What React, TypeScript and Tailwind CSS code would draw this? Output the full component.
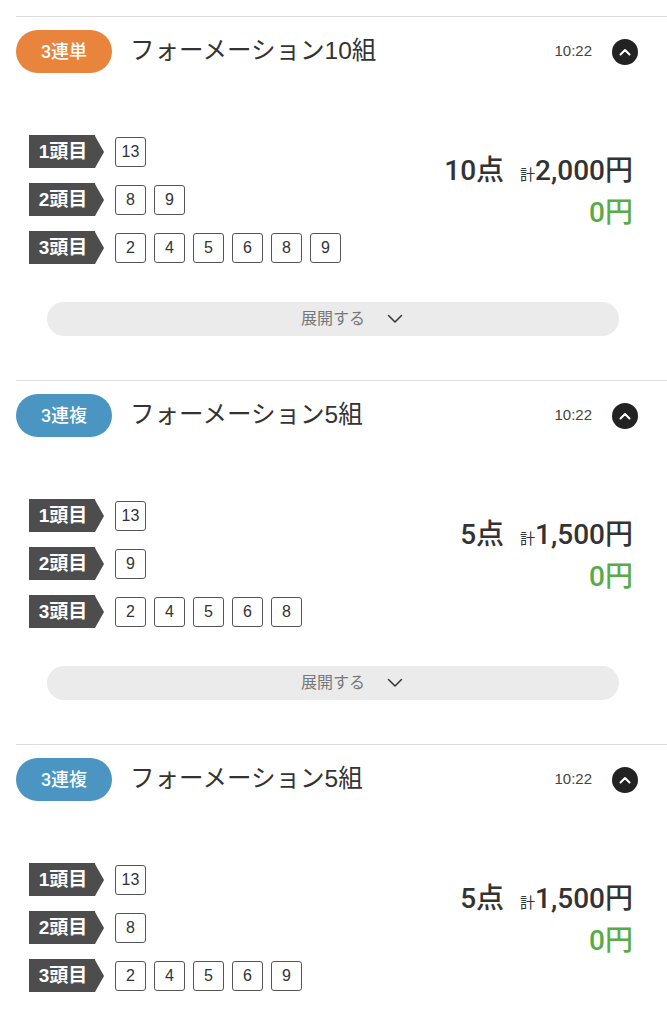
import React from 'react'

type Ticket = {
  kind: string
  color: string
  title: string
  time: string
  legs: number[][]
  points: string
  total: string
  payout: string
}

const tickets: Ticket[] = [
  { kind: '3連単', color: 'bg-[#e8843c]', title: 'フォーメーション10組', time: '10:22', legs: [[13], [8, 9], [2, 4, 5, 6, 8, 9]], points: '10点', total: '2,000円', payout: '0円' },
  { kind: '3連複', color: 'bg-[#4a95c2]', title: 'フォーメーション5組', time: '10:22', legs: [[13], [9], [2, 4, 5, 6, 8]], points: '5点', total: '1,500円', payout: '0円' },
  { kind: '3連複', color: 'bg-[#4a95c2]', title: 'フォーメーション5組', time: '10:22', legs: [[13], [8], [2, 4, 5, 6, 9]], points: '5点', total: '1,500円', payout: '0円' },
]

const font = { fontFamily: '"Liberation Sans", "Noto Sans CJK JP", sans-serif' }
const medium = { fontFamily: 'Roboto, "Noto Sans CJK JP", sans-serif' }

function LegTag({ n }: { n: number }) {
  return (
    <div className="relative flex h-[33px] w-[75px] items-center">
      <div className="flex h-full w-[66px] items-center justify-center bg-[#4d4d4d] pl-[2px] text-[19px] font-bold leading-none text-white">
        {n}頭目
      </div>
      <div className="h-0 w-0 border-y-[16.5px] border-l-[9px] border-y-transparent border-l-[#4d4d4d]" />
    </div>
  )
}

function Section({ t }: { t: Ticket }) {
  return (
    <section className="ml-4 border-t border-[#dcdcdc]">
      <div className="flex items-center pt-[13px]">
        <div className={`flex h-[43px] w-[96px] items-center justify-center rounded-full ${t.color} text-[18px] font-medium text-white`} style={medium}>
          {t.kind}
        </div>
        <div className="ml-[18px] flex-1 text-[24.5px] text-[#333]">{t.title}</div>
        <div className="text-[15px] text-[#444]">{t.time}</div>
        <div className="ml-[20px] mr-[29px] flex h-[26px] w-[26px] items-center justify-center rounded-full bg-[#222]">
          <svg width="12" height="8" viewBox="0 0 12 8" fill="none">
            <path d="M1.5 6.5 L6 2 L10.5 6.5" stroke="white" strokeWidth="2" strokeLinecap="round" strokeLinejoin="round" />
          </svg>
        </div>
      </div>

      <div className="mt-[62px] flex items-center pl-[13px] pr-[34px]">
        <div className="flex flex-col gap-[15px]">
          {t.legs.map((nums, i) => (
            <div key={i} className="flex items-center">
              <LegTag n={i + 1} />
              <div className="ml-[11px] flex gap-[8px]">
                {nums.map(v => (
                  <div key={v} className="flex h-[30px] w-[31px] items-center justify-center rounded-[3px] border border-[#555] text-[16px] text-[#333]">
                    {v}
                  </div>
                ))}
              </div>
            </div>
          ))}
        </div>
        <div className="mb-[15px] ml-auto flex flex-col items-end" style={medium}>
          <div className="flex items-baseline text-[#333]">
            <span className="text-[28px] font-medium">{t.points}</span>
            <span className="ml-[16px] text-[15px]">計</span>
            <span className="text-[28px] font-medium">{t.total}</span>
          </div>
          <div className="text-[28px] font-medium text-[#5aab46]">{t.payout}</div>
        </div>
      </div>

      <div className="mb-[44px] ml-[31px] mr-[48px] mt-[38px] flex h-[34px] items-center justify-center rounded-full bg-[#ebebeb]">
        <span className="ml-[38px] text-[16px] text-[#777]">展開する</span>
        <svg className="ml-[22px]" width="16" height="10" viewBox="0 0 16 10" fill="none">
          <path d="M1.5 1.5 L8 8 L14.5 1.5" stroke="#333" strokeWidth="1.5" strokeLinecap="round" strokeLinejoin="round" />
        </svg>
      </div>
    </section>
  )
}

export default function App() {
  return (
    <div className="min-h-screen bg-white pt-4" style={font}>
      {tickets.map((t, i) => (
        <Section key={i} t={t} />
      ))}
    </div>
  )
}
